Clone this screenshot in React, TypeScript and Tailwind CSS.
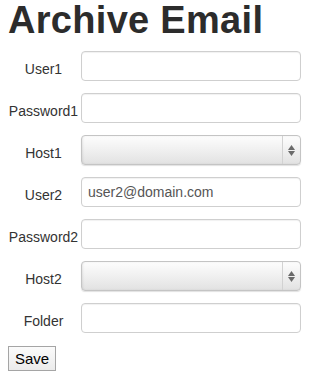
import React from "react";

const font = { fontFamily: '"Liberation Sans", Arial, Helvetica, sans-serif' };

function Label({ children }: { children: React.ReactNode }) {
  return (
    <div className="w-[71px] shrink-0 text-center text-[14px] leading-[30px] pt-[3px] text-[#333] whitespace-nowrap">
      {children}
    </div>
  );
}

function TextInput({ value }: { value?: string }) {
  return (
    <div className="ml-[2px] w-[220px] h-[30px] rounded-[4px] border border-[#cfcfcf] bg-white px-[6px] flex items-center text-[14px] text-[#555] shadow-[inset_0_1px_1px_rgba(0,0,0,0.06)]">
      {value}
    </div>
  );
}

function SelectBox() {
  return (
    <div className="ml-[2px] w-[220px] h-[30px] rounded-[4px] border border-[#c4c4c4] bg-gradient-to-b from-[#fdfdfd] via-[#f0f0f0] to-[#e2e2e2] shadow-[0_1px_1px_rgba(0,0,0,0.12),inset_1px_0_2px_rgba(0,0,0,0.08)] flex">
      <div className="flex-1" />
      <div className="w-[18px] border-l border-[#d2d2d2] flex flex-col items-center justify-center gap-[1px]">
        <svg width="7" height="5" viewBox="0 0 7 5"><path d="M3.5 0 L7 5 L0 5 Z" fill="#6a6a6a" /></svg>
        <svg width="7" height="5" viewBox="0 0 7 5"><path d="M0 0 L7 0 L3.5 5 Z" fill="#6a6a6a" /></svg>
      </div>
    </div>
  );
}

export default function App() {
  const rows: { label: string; kind: "text" | "select"; value?: string }[] = [
    { label: "User1", kind: "text" },
    { label: "Password1", kind: "text" },
    { label: "Host1", kind: "select" },
    { label: "User2", kind: "text", value: "user2@domain.com" },
    { label: "Password2", kind: "text" },
    { label: "Host2", kind: "select" },
    { label: "Folder", kind: "text" },
  ];
  return (
    <div className="w-[315px] h-[382px] bg-white px-[8px]" style={font}>
      <h1 className="text-[38px] font-bold leading-[40px] text-[#2c2c2c] h-[40px] tracking-[0.3px] whitespace-nowrap">Archive Email</h1>
      <div className="mt-[11px] flex flex-col gap-[12px]">
        {rows.map((r) => (
          <div key={r.label} className="flex h-[30px]">
            <Label>{r.label}</Label>
            {r.kind === "text" ? <TextInput value={r.value} /> : <SelectBox />}
          </div>
        ))}
      </div>
      <button className="mt-[13px] w-[48px] h-[25px] border border-[#a5a5a5] bg-gradient-to-b from-[#fbfbfb] to-[#ebebeb] text-[15px] text-black leading-none">
        Save
      </button>
    </div>
  );
}
